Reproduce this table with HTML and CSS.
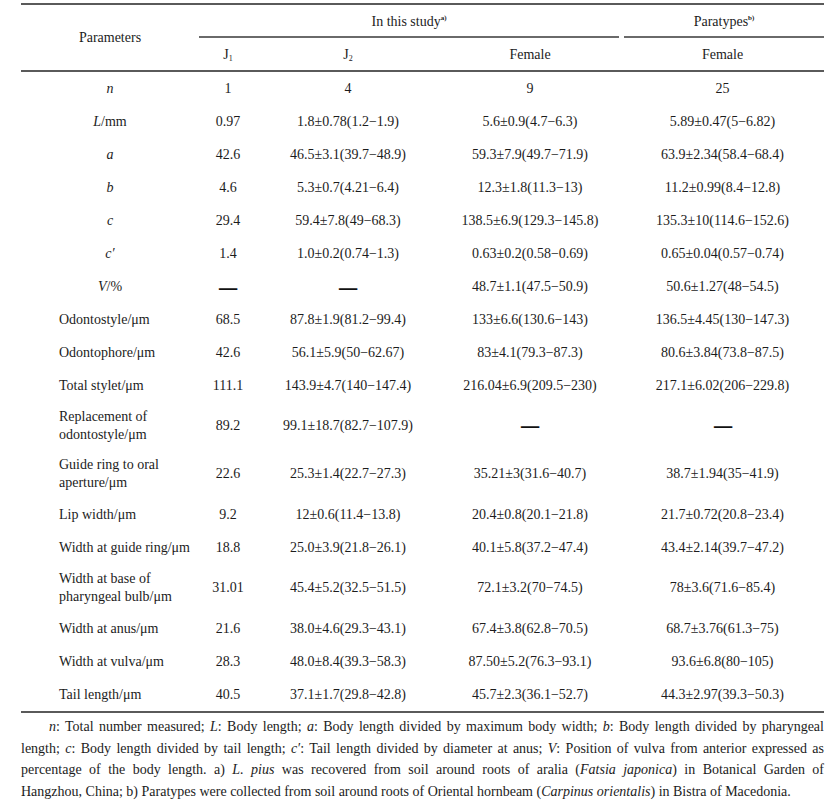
FILE: index.html
```html
<!DOCTYPE html>
<html>
<head>
<meta charset="utf-8">
<link rel="stylesheet" href="styles.css">
</head>
<body>
<table class="data">
  <colgroup>
    <col class="c-param"><col class="c-j1"><col class="c-j2"><col class="c-fem"><col class="c-para">
  </colgroup>
  <thead>
    <tr class="h1">
      <th rowspan="2" class="param-h">Parameters</th>
      <th colspan="3" class="grp-cell"><div class="grp grp-left">In this study<sup>a)</sup></div></th>
      <th class="grp-cell"><div class="grp grp-right">Paratypes<sup>b)</sup></div></th>
    </tr>
    <tr class="h2">
      <th>J<sub>1</sub></th>
      <th>J<sub>2</sub></th>
      <th>Female</th>
      <th>Female</th>
    </tr>
  </thead>
  <tbody>
    <tr><td class="sym"><i>n</i></td><td>1</td><td>4</td><td>9</td><td>25</td></tr>
    <tr><td class="sym"><i>L</i>/mm</td><td>0.97</td><td>1.8±0.78(1.2−1.9)</td><td>5.6±0.9(4.7−6.3)</td><td>5.89±0.47(5−6.82)</td></tr>
    <tr><td class="sym"><i>a</i></td><td>42.6</td><td>46.5±3.1(39.7−48.9)</td><td>59.3±7.9(49.7−71.9)</td><td>63.9±2.34(58.4−68.4)</td></tr>
    <tr><td class="sym"><i>b</i></td><td>4.6</td><td>5.3±0.7(4.21−6.4)</td><td>12.3±1.8(11.3−13)</td><td>11.2±0.99(8.4−12.8)</td></tr>
    <tr><td class="sym"><i>c</i></td><td>29.4</td><td>59.4±7.8(49−68.3)</td><td>138.5±6.9(129.3−145.8)</td><td>135.3±10(114.6−152.6)</td></tr>
    <tr><td class="sym"><i>c′</i></td><td>1.4</td><td>1.0±0.2(0.74−1.3)</td><td>0.63±0.2(0.58−0.69)</td><td>0.65±0.04(0.57−0.74)</td></tr>
    <tr><td class="sym"><i>V</i>/%</td><td><span class="dash">—</span></td><td><span class="dash">—</span></td><td>48.7±1.1(47.5−50.9)</td><td>50.6±1.27(48−54.5)</td></tr>
    <tr><td class="lbl">Odontostyle/μm</td><td>68.5</td><td>87.8±1.9(81.2−99.4)</td><td>133±6.6(130.6−143)</td><td>136.5±4.45(130−147.3)</td></tr>
    <tr><td class="lbl">Odontophore/μm</td><td>42.6</td><td>56.1±5.9(50−62.67)</td><td>83±4.1(79.3−87.3)</td><td>80.6±3.84(73.8−87.5)</td></tr>
    <tr><td class="lbl">Total stylet/μm</td><td>111.1</td><td>143.9±4.7(140−147.4)</td><td>216.04±6.9(209.5−230)</td><td>217.1±6.02(206−229.8)</td></tr>
    <tr class="dbl"><td class="lbl">Replacement of<br>odontostyle/μm</td><td>89.2</td><td>99.1±18.7(82.7−107.9)</td><td><span class="dash">—</span></td><td><span class="dash">—</span></td></tr>
    <tr class="dbl"><td class="lbl">Guide ring to oral<br>aperture/μm</td><td>22.6</td><td>25.3±1.4(22.7−27.3)</td><td>35.21±3(31.6−40.7)</td><td>38.7±1.94(35−41.9)</td></tr>
    <tr><td class="lbl">Lip width/μm</td><td>9.2</td><td>12±0.6(11.4−13.8)</td><td>20.4±0.8(20.1−21.8)</td><td>21.7±0.72(20.8−23.4)</td></tr>
    <tr><td class="lbl">Width at guide ring/μm</td><td>18.8</td><td>25.0±3.9(21.8−26.1)</td><td>40.1±5.8(37.2−47.4)</td><td>43.4±2.14(39.7−47.2)</td></tr>
    <tr class="dbl"><td class="lbl">Width at base of<br>pharyngeal bulb/μm</td><td>31.01</td><td>45.4±5.2(32.5−51.5)</td><td>72.1±3.2(70−74.5)</td><td>78±3.6(71.6−85.4)</td></tr>
    <tr><td class="lbl">Width at anus/μm</td><td>21.6</td><td>38.0±4.6(29.3−43.1)</td><td>67.4±3.8(62.8−70.5)</td><td>68.7±3.76(61.3−75)</td></tr>
    <tr><td class="lbl">Width at vulva/μm</td><td>28.3</td><td>48.0±8.4(39.3−58.3)</td><td>87.50±5.2(76.3−93.1)</td><td>93.6±6.8(80−105)</td></tr>
    <tr class="last"><td class="lbl">Tail length/μm</td><td>40.5</td><td>37.1±1.7(29.8−42.8)</td><td>45.7±2.3(36.1−52.7)</td><td>44.3±2.97(39.3−50.3)</td></tr>
  </tbody>
</table>
<div class="note">
  <span class="line first"><i>n</i>: Total number measured; <i>L</i>: Body length; <i>a</i>: Body length divided by maximum body width; <i>b</i>: Body length divided by pharyngeal</span>
  <span class="line">length; <i>c</i>: Body length divided by tail length; <i>c′</i>: Tail length divided by diameter at anus; <i>V</i>: Position of vulva from anterior expressed as</span>
  <span class="line">percentage of the body length. a) <i>L. pius</i> was recovered from soil around roots of aralia (<i>Fatsia japonica</i>) in Botanical Garden of</span>
  <span class="line end">Hangzhou, China; b) Paratypes were collected from soil around roots of Oriental hornbeam (<i>Carpinus orientalis</i>) in Bistra of Macedonia.</span>
</div>
</body>
</html>
```

FILE: styles.css
```css
html, body {
  margin: 0;
  background: #ffffff;
}
body {
  padding: 3px 11px 0 21px;
  font-family: "Liberation Serif", "Times New Roman", serif;
  font-size: 14px;
  color: #1c1c1c;
}
.data {
  width: 803px;
  table-layout: fixed;
  border-collapse: separate;
  border-spacing: 0;
}
.c-param { width: 178px; }
.c-j1 { width: 58px; }
.c-j2 { width: 182px; }
.c-fem { width: 182px; }
.c-para { width: 203px; }

.data th {
  font-weight: normal;
  text-align: center;
  line-height: 17px;
  padding: 0;
}
.h1 th {
  border-top: 2px solid #5a5a5a;
  vertical-align: bottom;
}
.data th.param-h {
  vertical-align: middle;
  border-bottom: 2px solid #5a5a5a;
}
.grp {
  padding: 8px 0 6px;
  border-bottom: 2px solid #6a6a6a;
}
.grp-left { margin-right: 2px; }
.grp-right { margin-left: 3px; }
.h2 th {
  padding: 8px 0 7px;
  border-bottom: 2px solid #5a5a5a;
}
sup {
  font-size: 7px;
  font-weight: bold;
  vertical-align: 6px;
  line-height: 0;
}
sub {
  font-size: 8px;
  vertical-align: -2px;
  line-height: 0;
}
.data td {
  text-align: center;
  line-height: 17px;
  padding: 8px 0;
  white-space: nowrap;
}
.data td.lbl {
  text-align: left;
  padding-left: 38px;
}
.data .dbl td {
  line-height: 18px;
  padding: 6px 0;
}
.data .dbl td.lbl {
  padding-left: 38px;
}
.data .last td {
  border-bottom: 2px solid #5a5a5a;
}
.dash {
  display: inline-block;
  font-weight: bold;
  color: #111;
  transform: scale(1.3, 1.8);
}
.note {
  width: 803px;
  padding-top: 3px;
  line-height: 21.7px;
}
.note .line {
  display: block;
  text-align: justify;
  text-align-last: justify;
}
.note .first {
  text-indent: 28px;
}
.note .end {
  text-align: left;
  text-align-last: left;
}
```
